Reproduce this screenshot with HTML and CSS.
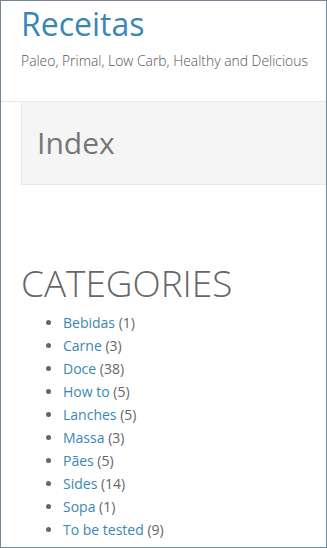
FILE: index.html
```html
<!DOCTYPE html>
<html lang="en">
<head>
  <meta charset="UTF-8" />
  <meta name="viewport" content="width=device-width, initial-scale=1.0"/>
  <title>Receitas</title>
  <link rel="stylesheet" href="styles.css">
</head>
<body>
  <div class="frame">
    <header class="site-header">
      <h1 class="site-title"><a href="#">Receitas</a></h1>
      <p class="site-description">Paleo, Primal, Low Carb, Healthy and Delicious</p>
    </header>

    <div class="page-header">
      <h2>Index</h2>
    </div>

    <section class="widget">
      <h3 class="widget-title">CATEGORIES</h3>
      <ul class="cat-list">
        <li><a href="#">Bebidas</a> (1)</li>
        <li><a href="#">Carne</a> (3)</li>
        <li><a href="#">Doce</a> (38)</li>
        <li><a href="#">How to</a> (5)</li>
        <li><a href="#">Lanches</a> (5)</li>
        <li><a href="#">Massa</a> (3)</li>
        <li><a href="#">Pães</a> (5)</li>
        <li><a href="#">Sides</a> (14)</li>
        <li><a href="#">Sopa</a> (1)</li>
        <li><a href="#">To be tested</a> (9)</li>
      </ul>
    </section>
  </div>
</body>
</html>
```

FILE: styles.css
```css
html, body {
  margin: 0;
  padding: 0;
  background: #ffffff;
}

body {
  font-family: 'Open Sans', sans-serif;
  color: #666;
}

a {
  color: #3a87b4;
  text-decoration: none;
}

.frame {
  box-sizing: border-box;
  height: 548px;
  border: 1px solid #748696;
  overflow: hidden;
}

.site-header {
  padding: 4px 20px 0 20px;
  height: 96px;
  border-bottom: 1px solid #e8e8e8;
}

.site-title {
  margin: 0;
  font-size: 32px;
  font-weight: 400;
  line-height: 38px;
}

.site-description {
  margin: 8px 0 0 0;
  font-size: 13.9px;
  font-weight: 300;
  color: #555;
  line-height: 20px;
  white-space: nowrap;
}

.page-header {
  margin-left: 20px;
  background: #f5f5f5;
  border-left: 1px solid #e8e8e8;
  border-bottom: 1px solid #e8e8e8;
  height: 82px;
  display: flex;
  align-items: center;
  padding-left: 15px;
}

.page-header h2 {
  margin: 0;
  font-size: 30px;
  font-weight: 400;
  color: #777;
  line-height: 36px;
}

.widget {
  padding: 77px 20px 0 20px;
}

.widget-title {
  margin: 0 0 7px 0;
  font-size: 36.9px;
  font-weight: 300;
  color: #666;
  line-height: 42px;
}

.cat-list {
  margin: 0;
  padding-left: 42px;
  font-size: 14px;
  line-height: 23px;
}
```
